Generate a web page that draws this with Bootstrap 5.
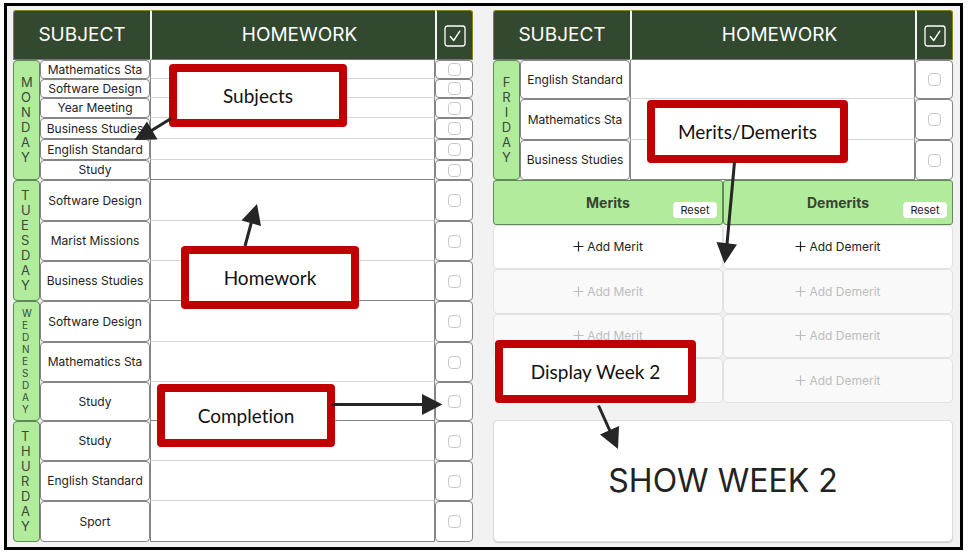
<!DOCTYPE html>
<html lang="en">
<head>
<meta charset="utf-8">
<meta name="viewport" content="width=device-width, initial-scale=1">
<title>Homework planner</title>
<link href="https://cdn.jsdelivr.net/npm/bootstrap@5.3.0/dist/css/bootstrap.min.css" rel="stylesheet">
<style>
body { font-family: Inter, "Liberation Sans", sans-serif; color: #222; background: #fff; }
.frame { margin: 3px 5px 6px 4px; border: 3px solid #000; background: #f2f2f2; padding: 4px 7px 5px 6px; }
.panels { gap: 20px; }
.panel { flex: 1 1 0; min-width: 0; }

.planner { table-layout: fixed; width: 100%; border-collapse: separate; border-spacing: 0; }
.col-day { width: 27px; }
.col-subject { width: 110px; }
.col-done { width: 38px; }
.planner th, .planner td { padding: 0; text-align: center; vertical-align: middle; background: #fff; font-weight: 400; }
.planner thead th { height: 50px; background: #32482f; color: #fff; font-size: 19px; line-height: 24px; border: solid #8c8416; border-width: 1px 0 0; border-bottom: 1px solid #777; }
.planner thead th + th { border-left: 2px solid #f4f4f4; }
.planner thead th:nth-child(2) { padding-left: 12px; }
.planner thead th:first-child { border-left: 1px solid #8c8416; border-top-left-radius: 3px; }
.planner thead th:last-child { border-right: 1px solid #8c8416; border-top-right-radius: 3px; }
.planner .subj, .planner .done { border: 1px solid #858585; border-radius: 4px; }
.planner .subj { font-size: 12px; line-height: 16px; white-space: nowrap; }
.planner .work { border: solid #858585; border-width: 0 1px 0 1px; border-bottom: 1px solid #d6d6d6; }
.planner .last .work { border-bottom-color: #858585; }
.planner .day { background: #b0ec9c; border: 1px solid #5f8a55; border-radius: 4px; color: #3f4a3b; font-size: 13px; line-height: 15px; text-align: left; padding-left: 7px; }
.planner .day.long { font-size: 10px; line-height: 12px; padding-left: 8px; }
.planner .day.mid { text-align: center; padding-left: 0; }
.r19 { height: 19px; } .r20 { height: 20px; } .r21 { height: 21px; }
.r39 { height: 39px; } .r40 { height: 40px; } .r41 { height: 41px; }
.work input { display: block; width: 100%; height: 16px; border: 0; background: transparent; padding: 0 6px; font-size: 12px; outline: 0; }
.tick.form-check-input { width: 13px; height: 13px; border: 1px solid #c9c9c9; border-radius: 4px; }

.tally { background: #b0ec9c; border: 1px solid #5f8a55; border-radius: 3px; height: 45px; color: #37452f; font-size: 14px; line-height: 18px; font-weight: 700; }
.reset { right: 5px; bottom: 6px; width: 44px; height: 16px; border: 0; border-radius: 4px; background: #fff; color: #222; font-size: 11px; line-height: 16px; padding: 0; }
.add { display: block; width: 100%; height: 44px; border: 1px solid #e2e2e2; border-radius: 5px; background: #fff; color: #222; font-size: 12px; line-height: 16px; padding: 0; }
.add:nth-of-type(even) { height: 45px; }
.add:disabled { background: #f9f9f9; color: #bdbdbd; }
.add svg { margin-right: 3px; vertical-align: -1px; }
.swap { margin-top: 17px; height: 122px; border: 1px solid #dcdcdc; border-radius: 5px; background: #fff; color: #222; font-size: 32px; line-height: 40px; box-shadow: 0 1px 1px #ccc; padding: 0; }

.note { position: absolute; width: 178px; height: 63px; border: 8px solid #c00000; border-radius: 4px; background: #fff; color: #111; font-family: Lato, sans-serif; font-size: 19px; line-height: 24px; font-variant-ligatures: none; }
.note.wide { width: 201px; }
.n-subjects { left: 169px; top: 64px; }
.n-homework { left: 181px; top: 246px; }
.n-completion { left: 157px; top: 384px; }
.n-merits { left: 647px; top: 100px; }
.n-week { left: 495px; top: 340px; }
.arrows { position: absolute; left: 0; top: 0; pointer-events: none; }
</style>
</head>
<body class="position-relative">
<main class="frame">
<div class="panels d-flex">
<section class="panel">
<table class="planner">
<colgroup><col class="col-day"><col class="col-subject"><col><col class="col-done"></colgroup>
<thead><tr><th colspan="2" scope="col">SUBJECT</th><th scope="col">HOMEWORK</th><th scope="col" aria-label="Done"><svg width="22" height="22" viewBox="0 0 22 22" fill="none" stroke="#fff"><rect x="1" y="1" width="20" height="20" rx="2.5" stroke-width="1.3"/><path d="M6.3 11.5l3.4 4L15.8 6.200" stroke-width="1.4" stroke-linecap="round" stroke-linejoin="round"/></svg></th></tr></thead>
<tbody>
<tr class="r19"><th class="day" rowspan="6" scope="rowgroup">M<br>O<br>N<br>D<br>A<br>Y</th><td class="subj">Mathematics Sta</td><td class="work"><input type="text" aria-label="Monday Mathematics homework"></td><td class="done"><input class="tick form-check-input d-block m-0 mx-auto" type="checkbox" aria-label="Mathematics done"></td></tr>
<tr class="r19"><td class="subj">Software Design</td><td class="work"><input type="text" aria-label="Monday Software Design homework"></td><td class="done"><input class="tick form-check-input d-block m-0 mx-auto" type="checkbox" aria-label="Software Design done"></td></tr>
<tr class="r20"><td class="subj">Year Meeting</td><td class="work"><input type="text" aria-label="Monday Year Meeting homework"></td><td class="done"><input class="tick form-check-input d-block m-0 mx-auto" type="checkbox" aria-label="Year Meeting done"></td></tr>
<tr class="r21"><td class="subj">Business Studies</td><td class="work"><input type="text" aria-label="Monday Business Studies homework"></td><td class="done"><input class="tick form-check-input d-block m-0 mx-auto" type="checkbox" aria-label="Business Studies done"></td></tr>
<tr class="r21"><td class="subj">English Standard</td><td class="work"><input type="text" aria-label="Monday English homework"></td><td class="done"><input class="tick form-check-input d-block m-0 mx-auto" type="checkbox" aria-label="English done"></td></tr>
<tr class="r20 last"><td class="subj">Study</td><td class="work"><input type="text" aria-label="Monday Study homework"></td><td class="done"><input class="tick form-check-input d-block m-0 mx-auto" type="checkbox" aria-label="Study done"></td></tr>
</tbody>
<tbody>
<tr class="r41"><th class="day" rowspan="3" scope="rowgroup">T<br>U<br>E<br>S<br>D<br>A<br>Y</th><td class="subj">Software Design</td><td class="work"><input type="text" aria-label="Tuesday Software Design homework"></td><td class="done"><input class="tick form-check-input d-block m-0 mx-auto" type="checkbox" aria-label="Software Design done"></td></tr>
<tr class="r40"><td class="subj">Marist Missions</td><td class="work"><input type="text" aria-label="Tuesday Marist Missions homework"></td><td class="done"><input class="tick form-check-input d-block m-0 mx-auto" type="checkbox" aria-label="Marist Missions done"></td></tr>
<tr class="r40 last"><td class="subj">Business Studies</td><td class="work"><input type="text" aria-label="Tuesday Business Studies homework"></td><td class="done"><input class="tick form-check-input d-block m-0 mx-auto" type="checkbox" aria-label="Business Studies done"></td></tr>
</tbody>
<tbody>
<tr class="r41"><th class="day long" rowspan="3" scope="rowgroup">W<br>E<br>D<br>N<br>E<br>S<br>D<br>A<br>Y</th><td class="subj">Software Design</td><td class="work"><input type="text" aria-label="Wednesday Software Design homework"></td><td class="done"><input class="tick form-check-input d-block m-0 mx-auto" type="checkbox" aria-label="Software Design done"></td></tr>
<tr class="r40"><td class="subj">Mathematics Sta</td><td class="work"><input type="text" aria-label="Wednesday Mathematics homework"></td><td class="done"><input class="tick form-check-input d-block m-0 mx-auto" type="checkbox" aria-label="Mathematics done"></td></tr>
<tr class="r39 last"><td class="subj">Study</td><td class="work"><input type="text" aria-label="Wednesday Study homework"></td><td class="done"><input class="tick form-check-input d-block m-0 mx-auto" type="checkbox" aria-label="Study done"></td></tr>
</tbody>
<tbody>
<tr class="r40"><th class="day" rowspan="3" scope="rowgroup">T<br>H<br>U<br>R<br>D<br>A<br>Y</th><td class="subj">Study</td><td class="work"><input type="text" aria-label="Thursday Study homework"></td><td class="done"><input class="tick form-check-input d-block m-0 mx-auto" type="checkbox" aria-label="Study done"></td></tr>
<tr class="r40"><td class="subj">English Standard</td><td class="work"><input type="text" aria-label="Thursday English homework"></td><td class="done"><input class="tick form-check-input d-block m-0 mx-auto" type="checkbox" aria-label="English done"></td></tr>
<tr class="r41 last"><td class="subj">Sport</td><td class="work"><input type="text" aria-label="Thursday Sport homework"></td><td class="done"><input class="tick form-check-input d-block m-0 mx-auto" type="checkbox" aria-label="Sport done"></td></tr>
</tbody>
</table>
</section>
<section class="panel">
<table class="planner">
<colgroup><col class="col-day"><col class="col-subject"><col><col class="col-done"></colgroup>
<thead><tr><th colspan="2" scope="col">SUBJECT</th><th scope="col">HOMEWORK</th><th scope="col" aria-label="Done"><svg width="22" height="22" viewBox="0 0 22 22" fill="none" stroke="#fff"><rect x="1" y="1" width="20" height="20" rx="2.5" stroke-width="1.3"/><path d="M6.3 11.5l3.4 4L15.8 6.200" stroke-width="1.4" stroke-linecap="round" stroke-linejoin="round"/></svg></th></tr></thead>
<tbody>
<tr class="r39"><th class="day mid" rowspan="3" scope="rowgroup">F<br>R<br>I<br>D<br>A<br>Y</th><td class="subj">English Standard</td><td class="work"><input type="text" aria-label="Friday English homework"></td><td class="done"><input class="tick form-check-input d-block m-0 mx-auto" type="checkbox" aria-label="English done"></td></tr>
<tr class="r41"><td class="subj">Mathematics Sta</td><td class="work"><input type="text" aria-label="Friday Mathematics homework"></td><td class="done"><input class="tick form-check-input d-block m-0 mx-auto" type="checkbox" aria-label="Mathematics done"></td></tr>
<tr class="r40 last"><td class="subj">Business Studies</td><td class="work"><input type="text" aria-label="Friday Business Studies homework"></td><td class="done"><input class="tick form-check-input d-block m-0 mx-auto" type="checkbox" aria-label="Business Studies done"></td></tr>
</tbody>
</table>
<div class="row g-0">
<div class="col-6">
<div class="tally position-relative d-flex align-items-center justify-content-center">Merits<button type="button" class="reset position-absolute">Reset</button></div>
<button type="button" class="add"><svg width="11" height="11" viewBox="0 0 11 11" stroke="currentColor" stroke-width="1.2"><path d="M5.500.5v10M.5 5.500h10"/></svg>Add Merit</button>
<button type="button" class="add" disabled><svg width="11" height="11" viewBox="0 0 11 11" stroke="currentColor" stroke-width="1.2"><path d="M5.500.5v10M.5 5.500h10"/></svg>Add Merit</button>
<button type="button" class="add" disabled><svg width="11" height="11" viewBox="0 0 11 11" stroke="currentColor" stroke-width="1.2"><path d="M5.500.5v10M.5 5.500h10"/></svg>Add Merit</button>
<button type="button" class="add" disabled aria-label="Add Merit"></button>
</div>
<div class="col-6">
<div class="tally position-relative d-flex align-items-center justify-content-center">Demerits<button type="button" class="reset position-absolute">Reset</button></div>
<button type="button" class="add"><svg width="11" height="11" viewBox="0 0 11 11" stroke="currentColor" stroke-width="1.2"><path d="M5.500.5v10M.5 5.500h10"/></svg>Add Demerit</button>
<button type="button" class="add" disabled><svg width="11" height="11" viewBox="0 0 11 11" stroke="currentColor" stroke-width="1.2"><path d="M5.500.5v10M.5 5.500h10"/></svg>Add Demerit</button>
<button type="button" class="add" disabled><svg width="11" height="11" viewBox="0 0 11 11" stroke="currentColor" stroke-width="1.2"><path d="M5.500.5v10M.5 5.500h10"/></svg>Add Demerit</button>
<button type="button" class="add" disabled><svg width="11" height="11" viewBox="0 0 11 11" stroke="currentColor" stroke-width="1.2"><path d="M5.500.5v10M.5 5.500h10"/></svg>Add Demerit</button>
</div>
</div>
<button type="button" class="swap d-block w-100">SHOW WEEK 2</button>
</section>
</div>
</main>

<div class="note n-subjects d-flex align-items-center justify-content-center">Subjects</div>
<div class="note n-homework d-flex align-items-center justify-content-center">Homework</div>
<div class="note n-completion d-flex align-items-center justify-content-center">Completion</div>
<div class="note wide n-merits d-flex align-items-center justify-content-center">Merits/Demerits</div>
<div class="note wide n-week d-flex align-items-center justify-content-center">Display Week 2</div>
<svg class="arrows" width="968" height="556" viewBox="0 0 968 556" aria-hidden="true">
<g stroke="#262626" stroke-width="3"><path d="M171 118.500L150 131.500"/><path d="M245 246L251.500 222"/><path d="M331 404.500H423"/><path d="M734.500 162L727 244"/><path d="M598.500 405.500L610 431"/></g>
<g fill="#262626"><path d="M134.500 140L147 121.500L157.500 139.500Z"/><path d="M257 204L241.500 220.500L261 226Z"/><path d="M442.500 404.500L422 394V415Z"/><path d="M724.500 263.500L716.500 242L737 244.500Z"/><path d="M618 449L600 434.500L619 426Z"/></g>
</svg>
<script src="https://cdn.jsdelivr.net/npm/bootstrap@5.3.0/dist/js/bootstrap.bundle.min.js"></script>
</body>
</html>
